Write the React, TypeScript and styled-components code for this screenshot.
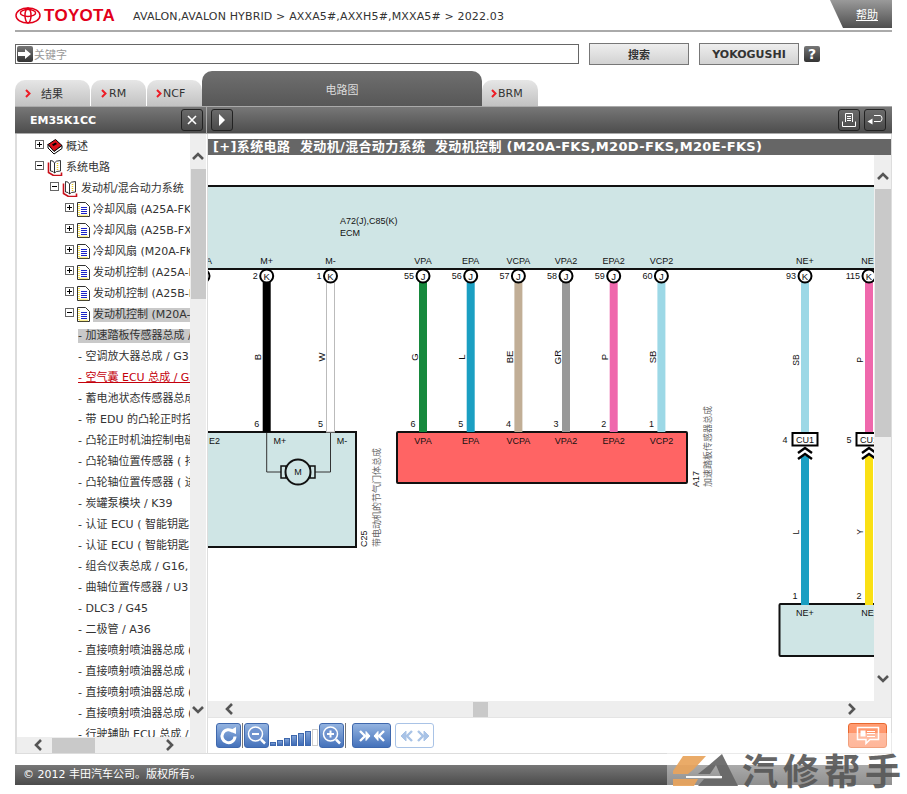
import React from "react";
import styled, { createGlobalStyle } from "styled-components";

const Global = createGlobalStyle`
  html, body { margin: 0; padding: 0; background: #fff; }
  * { box-sizing: border-box; }
`;
const FONT = `"DejaVu Sans", "Noto Sans CJK SC", sans-serif`;
const WIRE_FONT = `"Liberation Sans", "Noto Sans CJK SC", sans-serif`;

const Page = styled.div`
  position: relative; width: 907px; height: 794px; padding: 0 15px; overflow: hidden;
  font-family: ${FONT}; color: #222;
`;
const Header = styled.header`
  display: flex; align-items: flex-start; height: 32px; border-bottom: 2px solid #aaa;
`;
const Logo = styled.div`
  display: flex; align-items: center; gap: 3px; height: 30px; width: 118px; padding-top: 1px;
`;
const LogoWord = styled.span`
  font: bold 17px "Liberation Sans", sans-serif; color: #e2001a; letter-spacing: 0.3px;
`;
const Crumb = styled.div`
  font-size: 11px; line-height: 34px; color: #333; letter-spacing: 0.15px; white-space: nowrap;
`;
const Help = styled.a`
  margin-left: auto; width: 62px; height: 28px; padding: 6px 14px 0 0; text-align: right;
  clip-path: polygon(0 0, 100% 0, 100% 100%, 13px 100%);
  background: linear-gradient(#9a9a9a, #4f4f4f); color: #fff; font-size: 11px; text-decoration: underline;
`;
const SearchRow = styled.div`
  display: flex; align-items: center; height: 22px; margin-top: 11px;
`;
const SearchBox = styled.div`
  display: flex; align-items: center; width: 564px; height: 20px; padding-left: 1px; gap: 1px;
  border: 1px solid #666; color: #999; font-size: 11px;
`;
const GoButton = styled.span`
  display: flex; align-items: center; justify-content: center; width: 16px; height: 16px;
  background: linear-gradient(#777, #333); border-radius: 2px;
`;
const ActionButton = styled.div<{ $gap: number }>`
  display: flex; align-items: center; justify-content: center; width: 100px; height: 22px; margin-left: ${(p) => p.$gap}px;
  border: 1px solid #777; background: linear-gradient(#eee, #d2d2d2); color: #333; font-size: 11px; font-weight: bold;
`;
const HelpMark = styled.div`
  display: flex; align-items: center; justify-content: center; width: 16px; height: 16px; margin-left: 5px;
  border-radius: 2px; background: linear-gradient(#777, #333); color: #fff; font-weight: bold; font-size: 14px;
`;
const Tabs = styled.nav`
  display: flex; align-items: flex-end; height: 35px; margin-top: 6px;
`;
const Tab = styled.div<{ $w: number; $pad: number; $mr?: number }>`
  display: flex; align-items: center; width: ${(p) => p.$w}px; height: 26px; margin-right: ${(p) => p.$mr ?? 0}px;
  padding: 0 0 0 ${(p) => p.$pad}px; border-radius: 10px 10px 0 0; background: linear-gradient(#e6e6e6, #c2c2c2);
  font-size: 11px; color: #333; white-space: nowrap;
`;
const ActiveTab = styled.div`
  display: flex; align-items: center; justify-content: center; width: 280px; height: 35px;
  border-radius: 10px 10px 0 0; background: linear-gradient(#6f6f6f, #575757); color: #ddd; font-size: 11px;
`;
const Bars = styled.div`
  display: flex; height: 28px; background: #aaa; padding: 1px 0;
`;
const BarLeft = styled.div`
  display: flex; align-items: center; width: 191px; padding: 0 3px 0 15px; margin-right: 1px;
  background: linear-gradient(#777, #4d4d4d); color: #fff; font-weight: bold; font-size: 11px;
`;
const BarRight = styled.div`
  display: flex; align-items: center; flex: 1; gap: 4px; padding: 0 6px 0 4px;
  background: linear-gradient(#777, #4d4d4d);
`;
const BarTitle = styled.span`flex: 1;`;
const BarSpacer = styled.span`flex: 1;`;
const BarButton = styled.div`
  display: flex; align-items: center; justify-content: center; width: 22px; height: 22px;
  border: 1px solid #222; border-radius: 3px; background: linear-gradient(#6a6a6a, #4a4a4a);
`;
const Main = styled.div`display: flex; height: 620px;`;
const TreePanel = styled.aside`
  display: flex; flex-direction: column; width: 192px; border-left: 2px solid #ddd; border-bottom: 1px solid #ddd; padding-right: 1px;
`;
const TreeTop = styled.div`display: flex; height: 603px;`;
const TreeList = styled.div`width: 173px; overflow: hidden; padding-top: 2px;`;
const Row = styled.div<{ $indent: number }>`
  display: flex; align-items: center; height: 21px; padding-left: ${(p) => p.$indent}px; white-space: nowrap; font-size: 11px; color: #333;
`;
const Expander = styled.span`
  position: relative; flex: none; width: 9px; height: 9px; margin: -4px 3px 0 0; border: 1px solid #666; background: #fff;
  &::before { content: ""; position: absolute; left: 1px; right: 1px; top: 3px; height: 1px; background: #000; }
`;
const ExpanderPlus = styled(Expander)`
  &::after { content: ""; position: absolute; top: 1px; bottom: 1px; left: 3px; width: 1px; background: #000; }
`;
const RowIcon = styled.svg`flex: none; margin-right: 3px;`;
const Label = styled.span<{ $sel?: boolean }>`
  flex: 1; min-width: 0; overflow: hidden; line-height: 14px; background: ${(p) => (p.$sel ? "#c9c9c9" : "transparent")};
`;
const Leaf = styled(Label)<{ $link?: boolean }>`
  color: ${(p) => (p.$link ? "#c4000b" : "#333")}; text-decoration: ${(p) => (p.$link ? "underline" : "none")};
`;
const VTrack = styled.div<{ $w: number }>`
  display: flex; flex-direction: column; align-items: center; flex: none; background: #eee;
  width: ${(p) => p.$w}px;
`;
const VThumb = styled.div<{ $h: number }>`flex: none; width: calc(100% - 1px); height: ${(p) => p.$h}px; margin-left: 1px; background: #c9c9c9;`;
const Gap = styled.div<{ $v: number }>`flex: none; height: ${(p) => p.$v}px;`;
const HTrack = styled.div`
  display: flex; align-items: center; height: 16px; background: #eee; flex: none;
`;
const HThumb = styled.div<{ $w: number; $ml: number; $mr: number }>`
  flex: none; width: ${(p) => p.$w}px; height: 15px; margin: 0 ${(p) => p.$mr}px 0 ${(p) => p.$ml}px; background: #c9c9c9;
`;
const RightPanel = styled.section`
  display: flex; flex-direction: column; flex: 1; min-width: 0; border-left: 1px solid #ddd; border-right: 1px solid #ddd; border-bottom: 1px solid #ddd; padding-top: 5px;
`;
const TitleBar = styled.h2`
  margin: 0; height: 16px; padding-left: 5px; background: #666; color: #fff; font: bold 13px/16px ${FONT}; letter-spacing: 0.35px; white-space: pre;
`;
const DiagramRow = styled.div`display: flex; height: 546px;`;
const Viewport = styled.div`width: 666px; height: 546px; overflow: hidden; svg { display: block; }`;
const Toolbar = styled.div`
  display: flex; align-items: center; height: 34px; padding: 2px 0 0 8px; border-top: 1px solid #e4e4e4; 
`;
const ToolButton = styled.div<{ $w?: number; $ml?: number }>`
  display: flex; align-items: center; justify-content: center; flex: none; width: ${(p) => p.$w ?? 25}px; height: 25px; margin-left: ${(p) => p.$ml ?? 0}px;
  border: 1px solid #3f68ad; border-radius: 3px; background: linear-gradient(#93b3e0, #4572bb);
`;
const GhostButton = styled(ToolButton)`border-color: #a9c3e6; background: #fff;`;
const ToolSep = styled.div`flex: none; width: 1px; height: 25px; margin-left: 1px; background: #777;`;
const ZoomBars = styled.div`display: flex; align-items: flex-end; gap: 1px; height: 25px; margin: 0 1px; padding-bottom: 2px;`;
const ZoomBar = styled.span<{ $h: number; $off?: boolean }>`
  width: 6px; height: ${(p) => p.$h}px; border: 1px solid ${(p) => (p.$off ? "#ccc" : "#3f68ad")};
  background: ${(p) => (p.$off ? "#fff" : "linear-gradient(#7ea1d6, #3f6db8)")};
`;
const Feedback = styled.div`
  display: flex; align-items: center; justify-content: center; flex: none; margin-left: auto; margin-right: 4px; width: 39px; height: 25px;
  border: 1px solid #e8682f; border-radius: 3px; background: linear-gradient(#ff9d74, #ff8a5c);
`;
const Footer = styled.footer`
  height: 20px; margin-top: 11px; padding-left: 8px; background: linear-gradient(#777, #4b4b4b); color: #fff; font-size: 11px; line-height: 20px;
`;
const Fade = styled.div`position: absolute; left: 667px; top: 733px; width: 240px; height: 52px; background: rgba(255,255,255,.38);`;
const Watermark = styled.div`
  position: absolute; left: 672px; top: 750px; display: flex; align-items: center; gap: 4px; height: 38px; opacity: .92;
`;
const WatermarkText = styled.span`
  font: bold 36px/38px "Noto Sans CJK SC", sans-serif; color: #585858; letter-spacing: 5px; white-space: nowrap;
`;

const Chevron = ({ d, c = "#555" }: { d: "up" | "down" | "left" | "right"; c?: string }) => {
  const pts = { up: "2,8 7,3 12,8", down: "2,3 7,8 12,3", left: "9,1 4,6 9,11", right: "4,1 9,6 4,11" }[d];
  const vert = d === "up" || d === "down";
  return (
    <svg width={vert ? 14 : 13} height={vert ? 11 : 12} viewBox={vert ? "0 0 14 11" : "0 0 13 12"}>
      <polyline points={pts} fill="none" stroke={c} strokeWidth="2.6" />
    </svg>
  );
};

const Toyota = () => (
  <svg width="26" height="17" viewBox="0 0 26 17" fill="none" stroke="#e2001a" strokeWidth="1.5">
    <ellipse cx="13" cy="8.5" rx="12" ry="7.6" />
    <ellipse cx="13" cy="6" rx="7.6" ry="3.4" />
    <ellipse cx="13" cy="8.5" rx="3" ry="7.4" />
  </svg>
);

const Book = () => (
  <RowIcon width="16" height="16" viewBox="0 0 16 16">
    <path d="M1 5.500 8.500 .5 15 6.500 7 12.500z" fill="#d8101a" stroke="#000" />
    <path d="M1 5.500v3.500l6 6 8-5.500V6.500l-8 6z" fill="#fff" stroke="#000" />
    <path d="M5 5.500l3.500-2 1.500 1.500-3.500 2z" fill="#000" />
  </RowIcon>
);
const OpenBook = () => (
  <RowIcon width="16" height="16" viewBox="0 0 16 16">
    <path d="M1.500 2.500v10l5 3h8v-3" fill="none" stroke="#c8101a" strokeWidth="1.6" />
    <path d="M3.500.5q3 0 4 2.500v10q-1-2-4-2z" fill="#fff" stroke="#222" strokeWidth=".9" />
    <path d="M7.500 3q1-2.500 6-2.500v10.500q-5 0-6 2z" fill="#fff" stroke="#222" strokeWidth=".9" />
    <path d="M10.500 3v8" stroke="#e8c820" strokeWidth="1.500" strokeDasharray="1 1" />
  </RowIcon>
);
const Doc = () => (
  <RowIcon width="13" height="15" viewBox="0 0 13 15">
    <path d="M.5.5h8l4 4v10H.5z" fill="#fff" stroke="#333" />
    <path d="M2 2v11.500h9" fill="none" stroke="#f0d820" strokeDasharray="1 1" strokeWidth="1.5" />
    <path d="M4 5.500h6M4 7.500h6M4 9.500h6M4 11.500h6" stroke="#1a22c8" />
  </RowIcon>
);

type Node = { t: string; i: number; kind: "book" | "open" | "docp" | "docm" | "leaf"; sel?: boolean; link?: boolean };
const tree: Node[] = [
  { t: "概述", i: 18, kind: "book" },
  { t: "系统电路", i: 18, kind: "open" },
  { t: "发动机/混合动力系统", i: 33, kind: "open" },
  { t: "冷却风扇 (A25A-FKS,A25A-FXS)", i: 48, kind: "docp" },
  { t: "冷却风扇 (A25B-FXS,A25C-FXS)", i: 48, kind: "docp" },
  { t: "冷却风扇 (M20A-FKS,M20D-FKS)", i: 48, kind: "docp" },
  { t: "发动机控制 (A25A-FKS,A25A-FXS)", i: 48, kind: "docp" },
  { t: "发动机控制 (A25B-FXS,A25C-FXS)", i: 48, kind: "docp" },
  { t: "发动机控制 (M20A-FKS,M20D-FKS)", i: 48, kind: "docm", sel: true },
  { t: "- 加速踏板传感器总成 / A17", i: 61, kind: "leaf", sel: true },
  { t: "- 空调放大器总成 / G3", i: 61, kind: "leaf" },
  { t: "- 空气囊 ECU 总成 / G29", i: 61, kind: "leaf", link: true },
  { t: "- 蓄电池状态传感器总成 / A1", i: 61, kind: "leaf" },
  { t: "- 带 EDU 的凸轮正时控制电机", i: 61, kind: "leaf" },
  { t: "- 凸轮正时机油控制电磁阀总成", i: 61, kind: "leaf" },
  { t: "- 凸轮轴位置传感器 ( 排气 )", i: 61, kind: "leaf" },
  { t: "- 凸轮轴位置传感器 ( 进气 )", i: 61, kind: "leaf" },
  { t: "- 炭罐泵模块 / K39", i: 61, kind: "leaf" },
  { t: "- 认证 ECU ( 智能钥匙 ) / G1", i: 61, kind: "leaf" },
  { t: "- 认证 ECU ( 智能钥匙 ) / G2", i: 61, kind: "leaf" },
  { t: "- 组合仪表总成 / G16, G17", i: 61, kind: "leaf" },
  { t: "- 曲轴位置传感器 / U3", i: 61, kind: "leaf" },
  { t: "- DLC3 / G45", i: 61, kind: "leaf" },
  { t: "- 二极管 / A36", i: 61, kind: "leaf" },
  { t: "- 直接喷射喷油器总成 (A1)", i: 61, kind: "leaf" },
  { t: "- 直接喷射喷油器总成 (A2)", i: 61, kind: "leaf" },
  { t: "- 直接喷射喷油器总成 (A3)", i: 61, kind: "leaf" },
  { t: "- 直接喷射喷油器总成 (A4)", i: 61, kind: "leaf" },
  { t: "- 行驶辅助 ECU 总成 / A5", i: 61, kind: "leaf" },
];

const TreeRow = ({ n }: { n: Node }) => {
  if (n.kind === "leaf")
    return (
      <Row $indent={n.i}>
        <Leaf $sel={n.sel} $link={n.link}>{n.t}</Leaf>
      </Row>
    );
  return (
    <Row $indent={n.i}>
      {n.kind === "book" || n.kind === "docp" ? <ExpanderPlus /> : <Expander />}
      {n.kind === "book" && <Book />}
      {n.kind === "open" && <OpenBook />}
      {(n.kind === "docp" || n.kind === "docm") && <Doc />}
      <Label $sel={n.sel}>{n.t}</Label>
    </Row>
  );
};

type Pin = { x: number; top: string; num: string; pin: string; wire: string; color: string; label: string; bot: string; outline?: boolean };
const pins: Pin[] = [
  { x: 266.7, top: "M+", num: "2", pin: "K", wire: "B", color: "#000", label: "", bot: "6" },
  { x: 330.5, top: "M-", num: "1", pin: "K", wire: "W", color: "#fff", label: "", bot: "5", outline: true },
  { x: 423, top: "VPA", num: "55", pin: "J", wire: "G", color: "#17893d", label: "VPA", bot: "6" },
  { x: 470.7, top: "EPA", num: "56", pin: "J", wire: "L", color: "#1b9fc2", label: "EPA", bot: "5" },
  { x: 518.4, top: "VCPA", num: "57", pin: "J", wire: "BE", color: "#c1ae96", label: "VCPA", bot: "4" },
  { x: 566, top: "VPA2", num: "58", pin: "J", wire: "GR", color: "#999", label: "VPA2", bot: "3" },
  { x: 613.7, top: "EPA2", num: "59", pin: "J", wire: "P", color: "#ef68ac", label: "EPA2", bot: "2" },
  { x: 661.4, top: "VCP2", num: "60", pin: "J", wire: "SB", color: "#9cd8e6", label: "VCP2", bot: "1" },
];

const T = ({ x, y, a = "middle", s = 9, c = "#111", r, children }: { x: number; y: number; a?: "start" | "middle" | "end"; s?: number; c?: string; r?: boolean; children: React.ReactNode }) => (
  <text x={x} y={y} fontSize={s} fill={c} textAnchor={a} transform={r ? `rotate(-90 ${x} ${y})` : undefined} fontFamily={WIRE_FONT}>{children}</text>
);
const PinHead = ({ x, n, p, top }: { x: number; n: string; p: string; top: string }) => (
  <g>
    <T x={x} y={264}>{top}</T>
    <T x={x - 9} y={279} a="end">{n}</T>
    <circle cx={x} cy={276} r={6.5} fill="#fff" stroke="#000" strokeWidth="2" />
    <T x={x} y={279.500} s={9.5}>{p}</T>
  </g>
);
const DoubleUp = ({ x }: { x: number }) => (
  <g fill="none" stroke="#000" strokeWidth="2.4">
    <polyline points={`${x - 7},${453} ${x},${448} ${x + 7},${453}`} />
    <polyline points={`${x - 7},${459} ${x},${454} ${x + 7},${459}`} />
  </g>
);

const Diagram = () => (
  <svg width="666" height="546" viewBox="208 155 666 546">
    <rect x="200" y="186" width="680" height="83" fill="#cfe5e5" />
    <line x1="200" x2="880" y1="186" y2="186" stroke="#111" strokeWidth="2" />
    <line x1="200" x2="880" y1="269" y2="269" stroke="#111" strokeWidth="2" />
    <T x={340} y={224} a="start">A72(J),C85(K)</T>
    <T x={340} y={236} a="start">ECM</T>
    <T x={212} y={264} a="end">A</T>
    <circle cx={203} cy={276} r={6.5} fill="#fff" stroke="#000" strokeWidth="2" />

    <rect x="205" y="432" width="151" height="115" fill="#cfe5e5" stroke="#111" strokeWidth="2" />
    <rect x="397" y="432" width="290" height="51" rx="1" fill="#ff6464" stroke="#111" strokeWidth="2" />
    <rect x="779.5" y="604" width="110" height="52" rx="1" fill="#cfe5e5" stroke="#111" strokeWidth="2" />

    {pins.map((p) => (
      <g key={p.num + p.top}>
        <rect x={p.x - 4} y={281} width={8} height={151} fill={p.color} stroke={p.outline ? "#bbb" : "none"} />
        <T x={p.x - 5.5} y={357} s={9.5} r>{p.wire}</T>
        <T x={p.x - 10} y={427}>{p.bot}</T>
        <PinHead x={p.x} n={p.num} p={p.pin} top={p.top} />
        {p.label && <T x={p.x} y={443.500}>{p.label}</T>}
      </g>
    ))}

    <T x={209} y={443.500} a="start">E2</T>
    <T x={280} y={443.500}>M+</T>
    <T x={342} y={443.500}>M-</T>
    <polyline points="266.7,433 266.7,472 284,472" fill="none" stroke="#333" />
    <polyline points="330.5,433 330.5,472 312,472" fill="none" stroke="#333" />
    <rect x="281" y="466" width="5" height="12" fill="#cfe5e5" stroke="#111" strokeWidth="1.5" />
    <rect x="310" y="466" width="5" height="12" fill="#cfe5e5" stroke="#111" strokeWidth="1.5" />
    <circle cx="298" cy="472" r="12.5" fill="#cfe5e5" stroke="#111" strokeWidth="2" />
    <T x={298} y={475}>M</T>
    <T x={367} y={547} a="start" r>C25</T>
    <T x={380} y={547} a="start" c="#666" r>带电动机的节气门体总成</T>
    <T x={699} y={487} a="start" r>A17</T>
    <T x={711} y={487} a="start" c="#666" r>加速踏板传感器总成</T>

    {[{ x: 805, top: "NE+", n: "93", a: "SB", ac: "#9cd8e6", b: "L", bc: "#1b9fc2", cn: "4", bn: "1" }, { x: 869, top: "NE-", n: "115", a: "P", ac: "#ef68ac", b: "Y", bc: "#fae014", cn: "5", bn: "2" }].map((w) => (
      <g key={w.x}>
        <rect x={w.x - 4} y={281} width={8} height={152} fill={w.ac} />
        <rect x={w.x - 4} y={456} width={8} height={149} fill={w.bc} />
        <T x={w.x - 6} y={360} r s={8.5}>{w.a}</T>
        <T x={w.x - 6} y={532} r s={8.5}>{w.b}</T>
        <PinHead x={w.x} n={w.n} p="K" top={w.top} />
        <rect x={w.x - 12.5} y={433} width={25} height={12.5} fill="#fff" stroke="#000" strokeWidth="2" />
        <T x={w.x} y={443}>CU1</T>
        <T x={w.x - 20} y={443}>{w.cn}</T>
        <DoubleUp x={w.x} />
        <T x={w.x - 10} y={599}>{w.bn}</T>
        <T x={w.x} y={616}>{w.top}</T>
      </g>
    ))}
  </svg>
);

const IconGo = () => (
  <svg width="14" height="10" viewBox="0 0 14 10"><path d="M0 3h7V0l6 5-6 5V7H0z" fill="#fff" /></svg>
);
const IconX = () => (
  <svg width="10" height="10" viewBox="0 0 10 10"><path d="M1 1l8 8M9 1l-8 8" stroke="#fff" strokeWidth="1.6" /></svg>
);
const IconPlay = () => (
  <svg width="8" height="12" viewBox="0 0 8 12"><path d="M1 0l6 6-6 6z" fill="#fff" /></svg>
);
const IconPrint = () => (
  <svg width="16" height="16" viewBox="0 0 16 16" fill="none" stroke="#fff"><path d="M4.500 10V1.500h7V10M6 4.500h4M6 6.500h4M6 8.500h4M1.500 9.500v5h13v-5" /></svg>
);
const IconBack = () => (
  <svg width="16" height="12" viewBox="0 0 16 12" fill="none" stroke="#fff"><path d="M7 7.500h6q2 0 2-3t-2-3H7" /><path d="M0.500 7.500l5-3v6z" fill="#fff" stroke="none" /></svg>
);
const IconReload = () => (
  <svg width="21" height="21" viewBox="0 0 21 21" fill="none"><path d="M15 6.500a6.500 6.500 0 1 0 2 5" stroke="#fff" strokeWidth="3" /><path d="M11 6l7-4v7z" fill="#fff" /></svg>
);
const IconZoom = ({ plus }: { plus?: boolean }) => (
  <svg width="22" height="22" viewBox="0 0 22 22" fill="none" stroke="#fff">
    <circle cx="9.500" cy="9" r="7" strokeWidth="1.5" fill="#6f93cf" />
    <path d="M6 9h7" strokeWidth="2" />
    {plus && <path d="M9.500 5.500v7" strokeWidth="2" />}
    <path d="M15 14.500l4 4" strokeWidth="2.500" />
  </svg>
);
const IconFit = ({ c, open }: { c: string; open?: boolean }) => (
  <svg width="30" height="14" viewBox="0 0 30 14" fill={c} stroke={c}>
    {open ? (
      <g>
        <path d="M1 7l5-5v10z" strokeWidth="1" />
        <polyline points="12,2 7,7 12,12" fill="none" strokeWidth="2.400" />
        <path d="M29 7l-5-5v10z" strokeWidth="1" />
        <polyline points="18,2 23,7 18,12" fill="none" strokeWidth="2.400" />
      </g>
    ) : (
      <g>
        <polyline points="3,2 8,7 3,12" fill="none" strokeWidth="2.400" />
        <path d="M13 7l-4-4.500v9z" strokeWidth="1" />
        <polyline points="27,2 22,7 27,12" fill="none" strokeWidth="2.400" />
        <path d="M17 7l4-4.500v9z" strokeWidth="1" />
      </g>
    )}
  </svg>
);
const IconComment = () => (
  <svg width="24" height="20" viewBox="0 0 24 20" fill="none" stroke="#fff">
    <path d="M1.500 1.500h21v12H14l-4 4v-4H1.500z" strokeWidth="1.500" />
    <path d="M4.500 4.500h5v6h-5z" fill="#fff" stroke="none" />
    <path d="M11 5.500h8M11 7.500h8M11 10.500h8" />
  </svg>
);
const RedMark = styled.span<{ $mr: number }>`
  display: inline-flex; margin-right: ${(p) => p.$mr}px;
`;
const Red = ({ mr }: { mr: number }) => (
  <RedMark $mr={mr}>
    <svg width="6" height="9" viewBox="0 0 6 9"><polyline points="1,1 4.500,4.500 1,8" fill="none" stroke="#ee1c25" strokeWidth="2" /></svg>
  </RedMark>
);
const CarMark = () => (
  <svg width="66" height="35" viewBox="0 0 66 35">
    <path d="M1 19 11 4h23L22 17l-6 5H1z" fill="#e9a45c" />
    <path d="M1 27h25l-4 7H1z" fill="#e9a45c" />
    <path d="M36 14 50 2l16 32H26l6-7h18L44 13l-6 9H26z" fill="#666" />
    <path d="M14 24h36v2H14z" fill="#fff" />
  </svg>
);

export default function App() {
  return (
    <Page>
      <Global />
      <Header>
        <Logo><Toyota /><LogoWord>TOYOTA</LogoWord></Logo>
        <Crumb>AVALON,AVALON HYBRID &gt; AXXA5#,AXXH5#,MXXA5# &gt; 2022.03</Crumb>
        <Help>帮助</Help>
      </Header>
      <SearchRow>
        <SearchBox><GoButton><IconGo /></GoButton>关键字</SearchBox>
        <ActionButton $gap={10}>搜索</ActionButton>
        <ActionButton $gap={10}>YOKOGUSHI</ActionButton>
        <HelpMark>?</HelpMark>
      </SearchRow>
      <Tabs>
        <Tab $w={75} $pad={10} $mr={1}><Red mr={10} />结果</Tab>
        <Tab $w={55} $pad={10} $mr={1}><Red mr={2} />RM</Tab>
        <Tab $w={55} $pad={9}><Red mr={1} />NCF</Tab>
        <ActiveTab>电路图</ActiveTab>
        <Tab $w={56} $pad={9}><Red mr={1} />BRM</Tab>
      </Tabs>
      <Bars>
        <BarLeft><BarTitle>EM35K1CC</BarTitle><BarButton><IconX /></BarButton></BarLeft>
        <BarRight>
          <BarButton><IconPlay /></BarButton>
          <BarSpacer />
          <BarButton><IconPrint /></BarButton>
          <BarButton><IconBack /></BarButton>
        </BarRight>
      </Bars>
      <Main>
        <TreePanel>
          <TreeTop>
            <TreeList>{tree.map((n) => <TreeRow key={n.t} n={n} />)}</TreeList>
            <VTrack $w={16}>
              <Gap $v={17} />
              <Chevron d="up" />
              <Gap $v={7} />
              <VThumb $h={130} />
              <Gap $v={405} />
              <Chevron d="down" />
            </VTrack>
          </TreeTop>
          <HTrack>
            <HThumb $w={0} $ml={15} $mr={0} />
            <Chevron d="left" />
            <HThumb $w={43} $ml={7} $mr={68} />
            <Chevron d="right" />
          </HTrack>
        </TreePanel>
        <RightPanel>
          <TitleBar>{"[+]系统电路  发动机/混合动力系统  发动机控制 (M20A-FKS,M20D-FKS,M20E-FKS)"}</TitleBar>
          <DiagramRow>
            <Viewport><Diagram /></Viewport>
            <VTrack $w={17}>
              <Gap $v={16} />
              <Chevron d="up" />
              <Gap $v={7} />
              <VThumb $h={248} />
              <Gap $v={236} />
              <Chevron d="down" />
            </VTrack>
          </DiagramRow>
          <HTrack>
            <HThumb $w={0} $ml={15} $mr={0} />
            <Chevron d="left" />
            <HThumb $w={15} $ml={237} $mr={357} />
            <Chevron d="right" />
          </HTrack>
          <Toolbar>
            <ToolButton><IconReload /></ToolButton>
            <ToolSep />
            <ToolButton $ml={1}><IconZoom /></ToolButton>
            <ZoomBars>
              {[4, 6, 8, 11, 13, 15, 17].map((h, i) => <ZoomBar key={h} $h={h} $off={i === 6} />)}
            </ZoomBars>
            <ToolButton><IconZoom plus /></ToolButton>
            <ToolSep />
            <ToolButton $w={39} $ml={6}><IconFit c="#fff" /></ToolButton>
            <GhostButton $w={39} $ml={4}><IconFit c="#a9c3e6" open /></GhostButton>
            <Feedback><IconComment /></Feedback>
          </Toolbar>
        </RightPanel>
      </Main>
      <Footer>© 2012 丰田汽车公司。版权所有。</Footer>
      <Fade />
      <Watermark><CarMark /><WatermarkText>汽修帮手</WatermarkText></Watermark>
    </Page>
  );
}
